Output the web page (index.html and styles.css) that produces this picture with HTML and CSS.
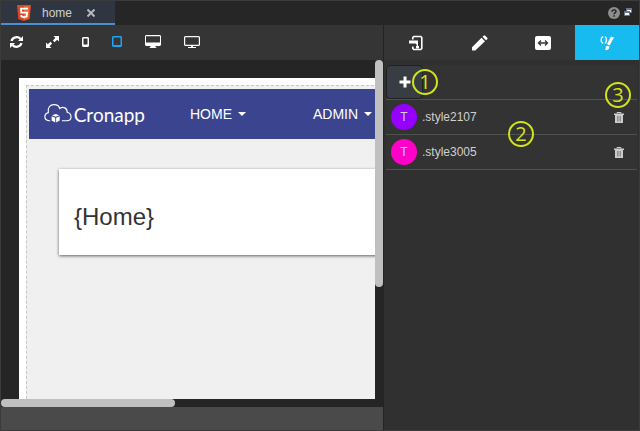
FILE: index.html
```html
<!DOCTYPE html>
<html lang="en">
<head>
  <meta charset="UTF-8">
  <meta name="viewport" content="width=device-width, initial-scale=1.0">
  <title>home</title>
  <link rel="stylesheet" href="styles.css">
</head>
<body>
<div class="window">
  <header class="tabbar">
    <div class="file-tab">
      <svg class="html5" width="14" height="16" viewBox="0 0 14 16">
        <path d="M0 0h14l-1.3 14L7 16l-5.700-2z" fill="#d6492a"/>
        <path d="M7 1.200h5.700l-1.100 12L7 14.700z" fill="#ee6a35"/>
        <path d="M11 3.700H4l.3 4h5.800l-.4 3.700L7 12.300l-2.600-.9-.1-1.400" fill="none" stroke="#fff" stroke-width="1.800"/>
      </svg>
      <span>home</span>
      <button class="close" aria-label="Close">
        <svg width="8" height="8" viewBox="0 0 8 8"><path d="M.5.5l7 7M7.500.5l-7 7" stroke="#b5b8bd" stroke-width="2"/></svg>
      </button>
    </div>
    <div class="window-tools">
      <button aria-label="Help">
        <svg width="12" height="12" viewBox="0 0 12 12">
          <circle cx="6" cy="6" r="6" fill="#8e8e8e"/>
          <path d="M4 4.700C4 2.300 8 2.300 8 4.500 8 6 6 5.800 6 7.300M6 8.300v1.500" fill="none" stroke="#262626" stroke-width="1.500"/>
        </svg>
      </button>
      <button aria-label="Restore">
        <svg class="restore" width="8" height="8" viewBox="0 0 8 8">
          <path d="M2 0h6v5H2z" fill="#66748f"/><path d="M3 2h4v2H3z" fill="#fff"/>
          <path d="M0 3h6v5H0z" fill="#66748f"/><path d="M1 5h4v2H1z" fill="#fff"/>
        </svg>
      </button>
    </div>
  </header>

  <div class="workspace">
    <main class="editor">
      <div class="toolbar">
        <button aria-label="Refresh">
          <svg width="13" height="12" viewBox="0 0 13 12">
            <path d="M1.500 5C2.500 1 8 0 10.500 3M11.500 7C10.500 11 5 12 2.500 9" fill="none" stroke="#fff" stroke-width="2.200"/>
            <path d="M13 0v5H8zM0 12V7h5z" fill="#fff"/>
          </svg>
        </button>
        <button aria-label="Expand">
          <svg width="13" height="12" viewBox="0 0 13 12">
            <path d="M7.500 0H13v5.500l-1.800-1.800L8.500 6.200 6.900 4.600l2.500-2.800zM5.500 12H0V6.500l1.800 1.800 2.700-2.500 1.600 1.600-2.500 2.800z" fill="#fff"/>
          </svg>
        </button>
        <button aria-label="Phone">
          <svg width="7" height="10" viewBox="0 0 7 10">
            <path fill-rule="evenodd" d="M1 0h5l1 1v8l-1 1H1L0 9V1zM1.500 1.500v6h4v-6z" fill="#fff"/>
          </svg>
        </button>
        <button aria-label="Tablet">
          <svg width="10" height="11" viewBox="0 0 10 11">
            <path fill-rule="evenodd" d="M1 0h8l1 1v9l-1 1H1l-1-1V1zM1.500 1.500V9h7V1.500z" fill="#1ba4f4"/>
          </svg>
        </button>
        <button aria-label="Desktop">
          <svg width="16" height="13" viewBox="0 0 16 13">
            <path fill-rule="evenodd" d="M1 0h14l1 1v9l-1 1h-4.500v1l1.500 1H4l1.500-1v-1H1l-1-1V1zM1 1.200V7.500h14V1.200z" fill="#fff"/>
          </svg>
        </button>
        <button aria-label="Large screen">
          <svg width="16" height="12" viewBox="0 0 16 12">
            <path fill-rule="evenodd" d="M1 0h14l1 1v8l-1 1H9v1h3v1H4v-1h3v-1H1L0 9V1zM1.200 1.200v7.600h13.600V1.200z" fill="#fff"/>
          </svg>
        </button>
      </div>

      <div class="canvas">
        <div class="viewport">
          <div class="page">
            <div class="page-body">
              <nav class="navbar">
                <a class="brand" href="#">
                  <svg width="32" height="24" viewBox="0 0 32 24">
                    <path d="M7 19.500H5.500C-.5 18.500-.3 12 4.800 10.500 3.500 5 7 1.500 11 1.500c4 0 6 2.200 6.500 4.300C21.500 3 26 5.500 25.800 10c6 1.500 5.700 9.500-.5 9.500H20" fill="none" stroke="#fff" stroke-width="1.300"/>
                    <path d="M13 12l4 1.500-4 1.700-4-1.700zM8.500 14.500l4 1.700v5.300l-4-2.300zM17.500 14.500l-4 1.700v5.300l4-2.300z" fill="#fff"/>
                  </svg>
                  <span>Cronapp</span>
                </a>
                <button class="menu">HOME <i class="caret"></i></button>
                <button class="menu">ADMIN <i class="caret"></i></button>
              </nav>
              <div class="card">
                <h1>{Home}</h1>
              </div>
            </div>
          </div>
        </div>
        <div class="scroll-y"><div class="thumb-y"></div></div>
        <div class="scroll-x"><div class="thumb-x"></div></div>
      </div>
      <div class="statusbar"></div>
    </main>

    <aside class="panel">
      <div class="panel-tabs">
        <button aria-label="Bindings">
          <svg width="14" height="16" viewBox="0 0 14 16">
            <path d="M3.800 4.500v-2l1-1h7l1 1v11l-1 1h-7l-1-1v-2" fill="none" stroke="#fff" stroke-width="1.600"/>
            <path d="M0 5.500h9V11h1v2.500H7V11.500L8 10 6.500 8.500H0z" fill="#fff"/>
          </svg>
        </button>
        <button aria-label="Edit">
          <svg width="16" height="16" viewBox="0 0 16 16">
            <path d="M0 15.500v-3.300L9.500 2.800l3.500 3.500L3.300 15.500zM10.500 1.800L12 .5h1L15.500 3v1L14 5.300z" fill="#fff"/>
          </svg>
        </button>
        <button aria-label="Layout">
          <svg width="16" height="14" viewBox="0 0 16 14">
            <rect width="16" height="14" rx="2" fill="#fff"/>
            <path d="M3.500 7h9M6 4.500L3.500 7 6 9.500M10 4.500L12.500 7 10 9.500" fill="none" stroke="#353535" stroke-width="1.300"/>
          </svg>
        </button>
        <button class="active" aria-label="Styles">
          <svg width="14" height="16" viewBox="0 0 14 16">
            <path d="M3 1.500C.5 3 .5 7 3 8.500M5 1.500c2 1.500 2 5.500 0 7" fill="none" stroke="#fff" stroke-width="1.400"/>
            <path d="M11 1.500l3 1L9.500 10.500 7 9zM6 11l3 .3c1 1.700-.5 4.200-4 3.700 1-1 .5-2.500 1-4z" fill="#fff"/>
          </svg>
        </button>
      </div>

      <div class="styles">
        <div class="add-row">
          <button class="add" aria-label="Add style">
            <svg width="12" height="12" viewBox="0 0 12 12"><path d="M6 .5v11M.5 6h11" stroke="#fff" stroke-width="3"/></svg>
          </button>
          <span class="badge badge-1">1</span>
          <span class="badge badge-3">3</span>
        </div>
        <ul class="style-list">
          <li>
            <span class="avatar purple">T</span>
            <span class="name">.style2107</span>
            <button class="trash" aria-label="Delete .style2107">
              <svg width="10" height="11" viewBox="0 0 10 11">
                <path d="M3 1.500V.5h4v1" fill="none" stroke="#ccc"/>
                <path fill-rule="evenodd" d="M0 1.500h10V3H9v8H1V3H0zM3 4v5.500h.4V4zM4.800 4v5.500h.4V4zM6.600 4v5.500h.4V4z" fill="#ccc"/>
              </svg>
            </button>
            <span class="badge badge-2">2</span>
          </li>
          <li>
            <span class="avatar pink">T</span>
            <span class="name">.style3005</span>
            <button class="trash" aria-label="Delete .style3005">
              <svg width="10" height="11" viewBox="0 0 10 11">
                <path d="M3 1.500V.5h4v1" fill="none" stroke="#ccc"/>
                <path fill-rule="evenodd" d="M0 1.500h10V3H9v8H1V3H0zM3 4v5.500h.4V4zM4.800 4v5.500h.4V4zM6.600 4v5.500h.4V4z" fill="#ccc"/>
              </svg>
            </button>
          </li>
        </ul>
      </div>
    </aside>
  </div>
</div>
</body>
</html>
```

FILE: styles.css
```css
* {
  box-sizing: border-box;
}
body {
  margin: 0;
  font-family: "Liberation Sans", Arial, sans-serif;
  font-size: 12px;
  background-color: #353535;
  color: #d0d0d0;
}
button {
  margin: 0;
  padding: 0;
  border: none;
  background: none;
  color: inherit;
  font: inherit;
  cursor: pointer;
}
svg {
  display: block;
}
.window {
  display: flex;
  flex-direction: column;
  min-height: 100vh;
  border: 1px solid #3b3b3b;
}

/* Open files */
.tabbar {
  display: flex;
  justify-content: space-between;
  height: 24px;
  background-color: #262626;
}
.file-tab {
  display: flex;
  align-items: center;
  padding: 2px 20px 0 16px;
  background-color: #2f3541;
  border-bottom: 2px solid #4a90d0;
}
.file-tab span {
  margin: 0 15px 0 11px;
}
.window-tools {
  display: flex;
  align-items: center;
  gap: 4px;
  padding-right: 7px;
}
.restore {
  margin-bottom: 3px;
}

.workspace {
  display: flex;
  flex: 1;
}
.editor {
  display: flex;
  flex-direction: column;
  flex: 1;
  min-width: 0;
}
.toolbar {
  display: flex;
  align-items: center;
  gap: 23px;
  height: 35px;
  padding: 0 0 2px 9px;
  background-color: #353535;
}

/* Page preview with its scrollbars */
.canvas {
  display: grid;
  grid-template-columns: minmax(0, 1fr) 8px;
  grid-template-rows: 1fr 8px;
  flex: 1;
  background-color: #252525;
}
.viewport {
  display: flex;
  overflow: hidden;
  padding: 18px 0 0 18px;
}
.page {
  display: flex;
  flex: none;
  width: 160%;
  padding: 7px 0 0 7px;
  background-color: #fff;
}
.page-body {
  flex: 1;
  padding: 3px 0 0 2px;
  background-color: #f0f0f0;
  border-top: 1px dashed #c8c8c8;
  border-left: 1px dashed #c8c8c8;
}
.navbar {
  display: flex;
  align-items: center;
  height: 50px;
  padding-left: 15px;
  background-color: #3b448e;
  color: #fff;
  font-size: 14px;
}
.brand {
  display: flex;
  align-items: center;
  gap: 1px;
  width: 101px;
  margin-right: 45px;
  color: #fff;
  font-family: Lato, sans-serif;
  font-size: 19px;
  text-decoration: none;
}
.menu {
  display: flex;
  align-items: center;
  gap: 6px;
  margin-right: 67px;
}
.caret {
  border-top: 4px solid #fff;
  border-left: 4px solid transparent;
  border-right: 4px solid transparent;
}
.card {
  margin: 30px;
  padding: 34px 15px 24px;
  background-color: #fff;
  box-shadow: 0 1px 3px rgba(0, 0, 0, 0.6);
}
.card h1 {
  margin: 0;
  color: #333;
  font-size: 24px;
  font-weight: normal;
  line-height: 28px;
}
.scroll-x {
  grid-column: 1 / 3;
}
.thumb-y {
  height: 67%;
  border-radius: 4px;
  background-color: #c0c0c0;
}
.thumb-x {
  width: 174px;
  height: 8px;
  border-radius: 4px;
  background-color: #c0c0c0;
}
.statusbar {
  height: 23px;
  background-color: #4a4a4a;
}

/* Style panel */
.panel {
  width: 256px;
  background-color: #303030;
  border-left: 1px solid #242424;
}
.panel-tabs {
  display: grid;
  grid-template-columns: repeat(4, 1fr);
  height: 35px;
  background-color: #353535;
}
.panel-tabs button {
  display: flex;
  align-items: center;
  justify-content: center;
}
.panel-tabs .active {
  background-color: #17bbef;
}
.styles {
  margin: 5px 2px 0;
  background-color: #333;
}
.add-row {
  position: relative;
  height: 35px;
  border-bottom: 1px solid #515151;
}
.add {
  display: flex;
  align-items: center;
  justify-content: center;
  width: 37px;
  height: 34px;
  border: 1px solid #1e2022;
  border-radius: 4px;
  background-color: #373d42;
}
.style-list {
  margin: 0;
  padding: 0;
  list-style: none;
}
.style-list li {
  position: relative;
  display: flex;
  align-items: center;
  gap: 5px;
  height: 35px;
  padding: 0 13px 0 5px;
  border-bottom: 1px solid #515151;
}
.avatar {
  width: 26px;
  height: 26px;
  border-radius: 50%;
  line-height: 26px;
  text-align: center;
}
.purple {
  background-color: #9500ff;
}
.pink {
  background-color: #ff00c8;
}
.name {
  flex: 1;
}

/* Numbered callouts */
.badge {
  position: absolute;
  width: 26px;
  height: 26px;
  border: 2px solid #d3e416;
  border-radius: 50%;
  color: #d3e416;
  font-family: "Open Sans", sans-serif;
  font-size: 20px;
  line-height: 22px;
  text-align: center;
}
.badge-1 {
  top: 4px;
  left: 26px;
}
.badge-2 {
  top: 21px;
  right: 103px;
}
.badge-3 {
  top: 17px;
  right: 6px;
}
```
